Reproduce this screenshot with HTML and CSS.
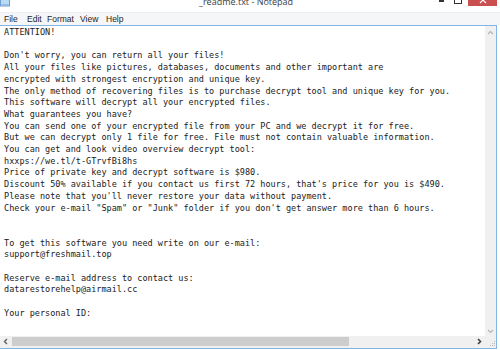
FILE: index.html
```html
<!doctype html>
<html lang="en">
	<head>
		<meta charset="UTF-8" />
		<meta name="viewport" content="width=device-width, initial-scale=1.0" />
		<title>_readme.txt - Notepad</title>
		<link rel="stylesheet" href="styles.css">
	</head>

	<body>
		<div class="window">
			<div class="titlebar">
				<svg class="app-icon" width="10" height="7" viewBox="0 0 10 7">
					<rect x="0.5" y="-4" width="9" height="10" fill="#b9daf4" stroke="#6e9fcf" />
					<rect x="1.5" y="4" width="7" height="1" fill="#8fbde6" />
				</svg>
				<div class="title">_readme.txt - Notepad</div>
				<div class="controls">
					<span class="btn-min"></span>
					<span class="btn-max"></span>
					<span class="btn-close">
						<svg width="8" height="4" viewBox="0 0 8 4">
							<path d="M1 -3 L7 3 M7 -3 L1 3" stroke="#fff" stroke-width="1.2" fill="none" />
						</svg>
					</span>
				</div>
			</div>

			<div class="menubar">
				<span class="menu-item w-file">File</span>
				<span class="menu-item w-edit">Edit</span>
				<span class="menu-item w-format">Format</span>
				<span class="menu-item w-view">View</span>
				<span class="menu-item">Help</span>
			</div>

			<div class="editor">
<pre class="text">ATTENTION!

Don't worry, you can return all your files!
All your files like pictures, databases, documents and other important are
encrypted with strongest encryption and unique key.
The only method of recovering files is to purchase decrypt tool and unique key for you.
This software will decrypt all your encrypted files.
What guarantees you have?
You can send one of your encrypted file from your PC and we decrypt it for free.
But we can decrypt only 1 file for free. File must not contain valuable information.
You can get and look video overview decrypt tool:
hxxps://we.tl/t-GTrvfBi8hs
Price of private key and decrypt software is $980.
Discount 50% available if you contact us first 72 hours, that's price for you is $490.
Please note that you'll never restore your data without payment.
Check your e-mail "Spam" or "Junk" folder if you don't get answer more than 6 hours.


To get this software you need write on our e-mail:
support@freshmail.top

Reserve e-mail address to contact us:
datarestorehelp@airmail.cc

Your personal ID:
</pre>
				<div class="vscroll">
					<svg width="7" height="5" viewBox="0 0 7 5">
						<path d="M1 4 L3.5 1.5 L6 4" stroke="#b4b4b4" stroke-width="1.2" fill="none" />
					</svg>
					<svg width="7" height="5" viewBox="0 0 7 5">
						<path d="M1 1 L3.5 3.5 L6 1" stroke="#b4b4b4" stroke-width="1.2" fill="none" />
					</svg>
				</div>
				<div class="hscroll">
					<svg class="arrow" width="5" height="7" viewBox="0 0 5 7">
						<path d="M4 1 L1.5 3.5 L4 6" stroke="#606060" stroke-width="1.4" fill="none" />
					</svg>
					<div class="thumb"></div>
					<svg class="arrow arrow-right" width="5" height="7" viewBox="0 0 5 7">
						<path d="M1 1 L3.5 3.5 L1 6" stroke="#404040" stroke-width="1.6" fill="none" />
					</svg>
				</div>
				<div class="corner">
					<svg width="8" height="8" viewBox="0 0 8 8">
						<rect x="6" y="1" width="1" height="1" fill="#b8b8b8" />
						<rect x="4" y="3" width="1" height="1" fill="#b8b8b8" />
						<rect x="6" y="3" width="1" height="1" fill="#b8b8b8" />
						<rect x="2" y="5" width="1" height="1" fill="#b8b8b8" />
						<rect x="4" y="5" width="1" height="1" fill="#b8b8b8" />
						<rect x="6" y="5" width="1" height="1" fill="#b8b8b8" />
					</svg>
				</div>
			</div>
		</div>
	</body>
</html>
```

FILE: styles.css
```css
body {
	margin: 0;
	background-color: #fff;
	font-family: "Liberation Sans", Arial, sans-serif;
}

.window {
	width: 500px;
	height: 350px;
	display: flex;
	flex-direction: column;
	overflow: hidden;
	background-color: #fff;
}

.titlebar {
	height: 12px;
	display: flex;
	align-items: flex-start;
	overflow: hidden;
	flex-shrink: 0;
}

.app-icon {
	display: block;
}

.title {
	margin-left: 189px;
	margin-top: -4px;
	font-family: "Open Sans", "Noto Sans", sans-serif;
	font-size: 9px;
	line-height: 12px;
	color: #3c3c3c;
	white-space: nowrap;
}

.controls {
	margin-left: auto;
	display: flex;
	align-items: flex-start;
	padding-right: 3px;
}

.btn-min {
	width: 5px;
	height: 2px;
	margin-right: 10px;
	background-color: #333;
}

.btn-max {
	width: 6px;
	height: 3px;
	margin-right: 6px;
	border: 1px solid #333;
	border-top: none;
}

.btn-close {
	width: 29px;
	height: 6px;
	background-color: #c9504f;
	display: flex;
	justify-content: center;
	align-items: flex-start;
}

.btn-close svg {
	display: block;
}

.menubar {
	height: 13px;
	display: flex;
	align-items: center;
	padding-left: 4px;
	background-color: #f5f6f7;
	border-top: 1px solid #eceef0;
	box-sizing: border-box;
	flex-shrink: 0;
}

.menu-item {
	font-family: "Liberation Sans", Arial, sans-serif;
	font-size: 8.5px;
	color: #1e1e1e;
}

.w-file {
	width: 23px;
}

.w-edit {
	width: 20px;
}

.w-format {
	width: 33px;
}

.w-view {
	width: 26px;
}

.editor {
	width: 497px;
	height: 324px;
	box-sizing: border-box;
	border-top: 1px solid #86b4e2;
	border-right: 1px solid #86b4e2;
	border-bottom: 1px solid #86b4e2;
	display: grid;
	grid-template-columns: 1fr 11px;
	grid-template-rows: 1fr 12px;
	flex-shrink: 0;
}

.text {
	margin: 0;
	padding: 1px 0 0 4px;
	font-family: "DejaVu Sans Mono", monospace;
	font-size: 8.52px;
	line-height: 11.7px;
	color: #222;
	overflow: hidden;
	background-color: #fff;
}

.vscroll {
	background-color: #f0f0f0;
	display: flex;
	flex-direction: column;
	justify-content: space-between;
	align-items: center;
	padding: 4px 0 2px;
}

.vscroll svg {
	display: block;
}

.hscroll {
	background-color: #f0f0f0;
	display: flex;
	align-items: center;
	padding: 1px 0 2px;
}

.arrow {
	display: block;
	margin: 0 3px 0 3px;
	flex-shrink: 0;
}

.arrow-right {
	margin-left: auto;
	margin-right: 3px;
}

.thumb {
	width: 337px;
	height: 100%;
	margin-left: 1px;
	background-color: #cdcdcd;
}

.corner {
	background-color: #f0f0f0;
	display: flex;
	align-items: flex-end;
	justify-content: flex-end;
}

.corner svg {
	display: block;
}
```
